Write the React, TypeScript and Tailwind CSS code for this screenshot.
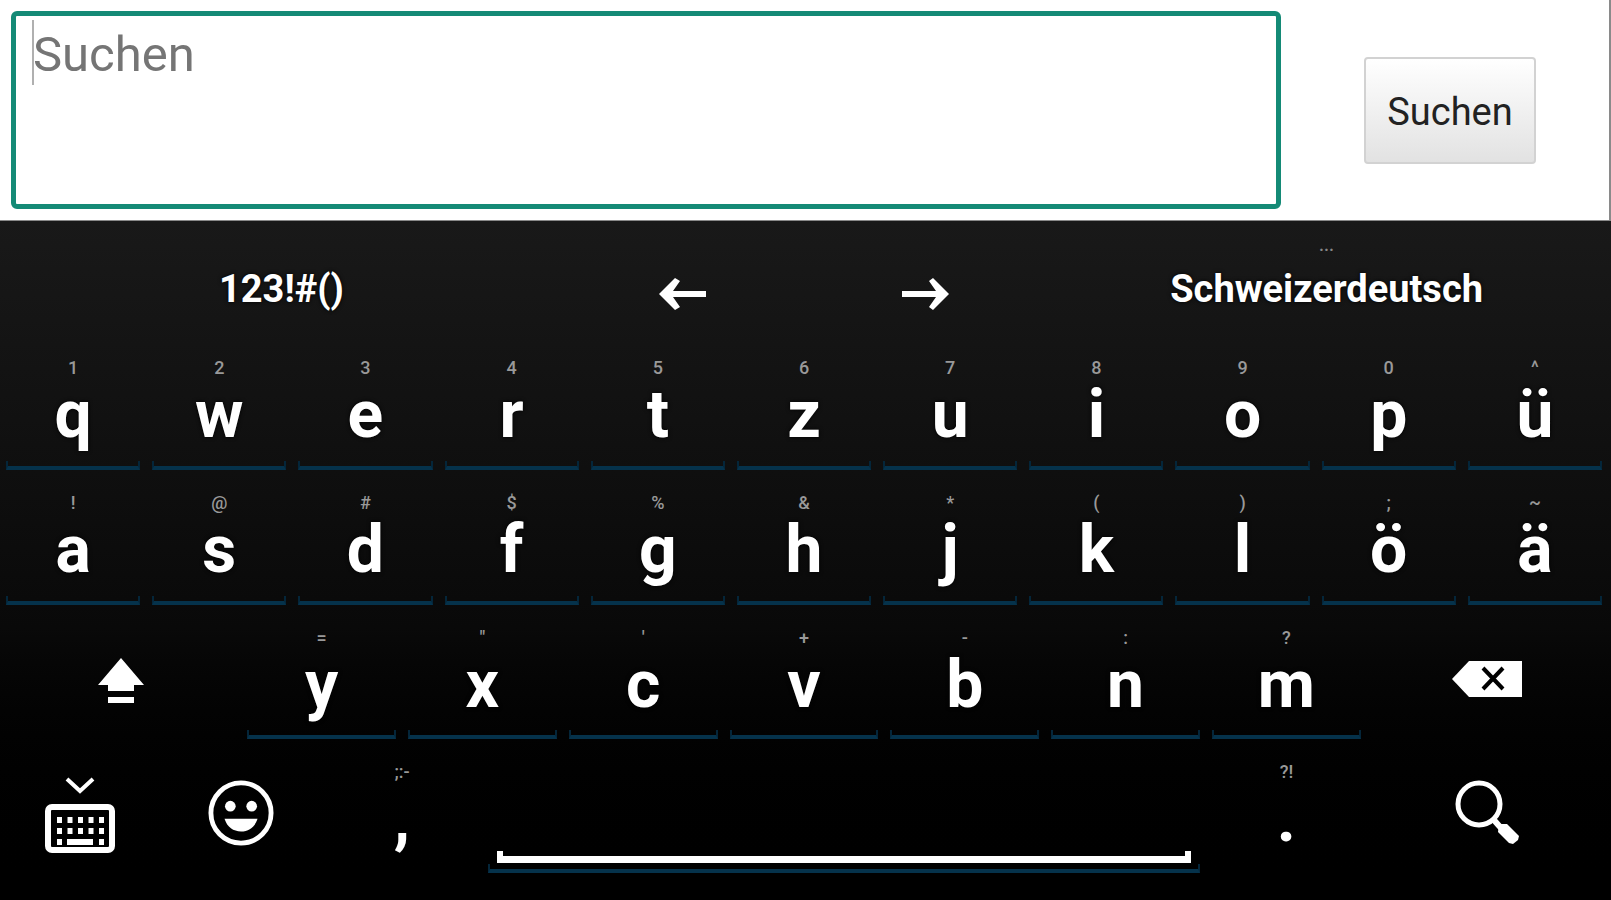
import { useState, type ReactNode } from "react";

type KeyDef = { label: string; hint: string };

const ROW_TOP: KeyDef[] = [
  { label: "q", hint: "1" },
  { label: "w", hint: "2" },
  { label: "e", hint: "3" },
  { label: "r", hint: "4" },
  { label: "t", hint: "5" },
  { label: "z", hint: "6" },
  { label: "u", hint: "7" },
  { label: "i", hint: "8" },
  { label: "o", hint: "9" },
  { label: "p", hint: "0" },
  { label: "ü", hint: "^" },
];

const ROW_HOME: KeyDef[] = [
  { label: "a", hint: "!" },
  { label: "s", hint: "@" },
  { label: "d", hint: "#" },
  { label: "f", hint: "$" },
  { label: "g", hint: "%" },
  { label: "h", hint: "&" },
  { label: "j", hint: "*" },
  { label: "k", hint: "(" },
  { label: "l", hint: ")" },
  { label: "ö", hint: ";" },
  { label: "ä", hint: "~" },
];

const ROW_BOTTOM: KeyDef[] = [
  { label: "y", hint: "=" },
  { label: "x", hint: "\"" },
  { label: "c", hint: "'" },
  { label: "v", hint: "+" },
  { label: "b", hint: "-" },
  { label: "n", hint: ":" },
  { label: "m", hint: "?" },
];

function Key({ label, hint, onPress }: KeyDef & { onPress: (value: string) => void }) {
  return (
    <button
      type="button"
      aria-label={label}
      onClick={() => onPress(label)}
      className="flex h-full w-full flex-col items-center pt-4 text-white"
    >
      <span className="h-[25px] text-[18px] leading-[20px] font-medium text-[#999]">{hint}</span>
      <span className="text-[66px] leading-[64px] font-bold [text-shadow:0_0_4px_#000]">{label}</span>
    </button>
  );
}

// thin tray drawn under the letter keys
function Underlined({ children }: { children: ReactNode }) {
  return (
    <div className="relative h-full px-[6px] pb-[7px]">
      {children}
      <div className="pointer-events-none absolute inset-x-[6px] bottom-[7px] h-[9px] border-x-2 border-b-4 border-x-[#04263a] border-b-[#05324b]" />
    </div>
  );
}

function IconKey({ label, className, children }: { label: string; className: string; children: ReactNode }) {
  return (
    <button type="button" aria-label={label} className={`flex justify-center text-white ${className}`}>
      {children}
    </button>
  );
}

export default function App() {
  const [query, setQuery] = useState("");
  const press = (value: string) => setQuery((q) => q + value);

  return (
    <main className="flex min-h-screen flex-col bg-black font-[Roboto,sans-serif]">
      <form
        onSubmit={(e) => e.preventDefault()}
        className="flex border-r-2 border-b border-[#8a8a8a] bg-white py-[11px] pl-[11px]"
      >
        <div className="relative flex-1">
          <textarea
            aria-label="Suchen"
            placeholder="Suchen"
            value={query}
            onChange={(e) => setQuery(e.target.value)}
            className="block h-[198px] w-full resize-none rounded-md border-[5px] border-[#148a76] bg-white px-[17px] py-[9px] text-[49px] leading-[60px] text-[#333] outline-none placeholder:text-[#757575]"
          />
          <span className="absolute top-[9px] left-[21px] h-[65px] w-[2px] bg-[#b0b0b0]" />
        </div>
        <div className="flex w-[328px] shrink-0 items-center pl-[83px]">
          <button
            type="submit"
            className="h-[107px] w-[172px] rounded-sm border-2 border-[#d2d2d2] bg-gradient-to-b from-white to-[#e2e2e2] pt-1 text-[38px] text-[#222]"
          >
            Suchen
          </button>
        </div>
      </form>

      <section
        aria-label="Tastatur"
        className="flex-1 bg-gradient-to-b from-[#191919] via-[#090909] via-60% to-black pr-[3px] pb-4"
      >
        <div className="grid h-[121px] grid-cols-20 text-white">
          <button type="button" className="col-span-7 flex flex-col items-center pt-[44px]">
            <span className="text-[38px] leading-[48px] font-bold [text-shadow:0_0_4px_#000]">123!#()</span>
          </button>
          <IconKey label="Links" className="col-span-3 items-center pt-6">
            <svg width="48" height="34" viewBox="0 0 48 34" fill="currentColor">
              <path d="M0 17L16 1L21 4L14 14H47V20H14L21 30L16 33Z" />
            </svg>
          </IconKey>
          <IconKey label="Rechts" className="col-span-3 items-center pt-6">
            <svg width="48" height="34" viewBox="0 0 48 34" fill="currentColor">
              <path d="M48 17L32 1L28 4L35 14H1V20H35L28 30L32 33Z" />
            </svg>
          </IconKey>
          <button type="button" className="col-span-7 flex flex-col items-center pt-3">
            <span className="h-8 text-[18px] leading-6 font-medium text-[#888]">...</span>
            <span className="text-[38px] leading-[48px] font-bold [text-shadow:0_0_4px_#000]">Schweizerdeutsch</span>
          </button>
        </div>

        {[ROW_TOP, ROW_HOME].map((row, i) => (
          <div key={i} className="grid h-[135px] grid-cols-11">
            {row.map((k) => (
              <Underlined key={k.label}>
                <Key {...k} onPress={press} />
              </Underlined>
            ))}
          </div>
        ))}

        <div className="grid h-[134px] grid-cols-20">
          <IconKey label="Umschalt" className="col-span-3 items-center pt-1">
            <svg width="46" height="46" viewBox="0 0 46 46" fill="currentColor">
              <path d="M23 0L46 27H36V33H10V27H0ZM10 39H36V45H10Z" />
            </svg>
          </IconKey>
          {ROW_BOTTOM.map((k) => (
            <div key={k.label} className="col-span-2">
              <Underlined>
                <Key {...k} onPress={press} />
              </Underlined>
            </div>
          ))}
          <IconKey label="Löschen" className="col-span-3 items-center">
            <svg width="70" height="36" viewBox="0 0 70 36">
              <path d="M0 18L17 0H70V36H17Z" fill="currentColor" />
              <path d="M31 7L51 28M51 7L31 28" stroke="#000" strokeWidth="4" />
            </svg>
          </IconKey>
        </div>

        <div className="grid h-[134px] grid-cols-20">
          <IconKey label="Tastatur ausblenden" className="col-span-2 items-start pt-[31px]">
            <svg width="70" height="76" viewBox="0 0 70 76" fill="none" stroke="currentColor">
              <path d="M22 2L35 14L48 2" strokeWidth="4" />
              <rect x="3" y="30" width="64" height="43" rx="4" strokeWidth="6" />
              <path d="M12 43H59M12 54H59" strokeWidth="6" strokeDasharray="5 5.500" />
              <path d="M12 65h5M22 65h26M54 65h5" strokeWidth="6" />
            </svg>
          </IconKey>
          <IconKey label="Smileys" className="col-span-2 items-start pt-[34px]">
            <svg width="66" height="66" viewBox="0 0 68 68" fill="currentColor">
              <circle cx="34" cy="34" r="31" fill="none" stroke="currentColor" strokeWidth="5" />
              <circle cx="23" cy="27" r="5.500" />
              <circle cx="45" cy="27" r="5.500" />
              <path d="M17 40H51C48 49 42 53 34 53S20 49 17 40Z" />
            </svg>
          </IconKey>
          <div className="col-span-2">
            <Key label="," hint=";:-" onPress={press} />
          </div>
          <div className="col-span-9">
            <Underlined>
              <button
                type="button"
                aria-label="Leerzeichen"
                onClick={() => press(" ")}
                className="flex h-full w-full items-end px-[9px] pb-[10px]"
              >
                <span className="h-[12px] w-full border-x-[6px] border-b-[7px] border-white" />
              </button>
            </Underlined>
          </div>
          <div className="col-span-2">
            <Key label="." hint="?!" onPress={press} />
          </div>
          <IconKey label="Suche starten" className="col-span-3 items-start pt-[34px]">
            <svg width="64" height="66" viewBox="0 0 64 66" fill="none" stroke="currentColor">
              <circle cx="24" cy="24" r="21" strokeWidth="5" />
              <path d="M38 39L46 48" strokeWidth="6" />
              <path d="M44 44L52 44L64 56L63 60L58 64L54 63L43 52Z" fill="currentColor" stroke="none" />
            </svg>
          </IconKey>
        </div>
      </section>
    </main>
  );
}
